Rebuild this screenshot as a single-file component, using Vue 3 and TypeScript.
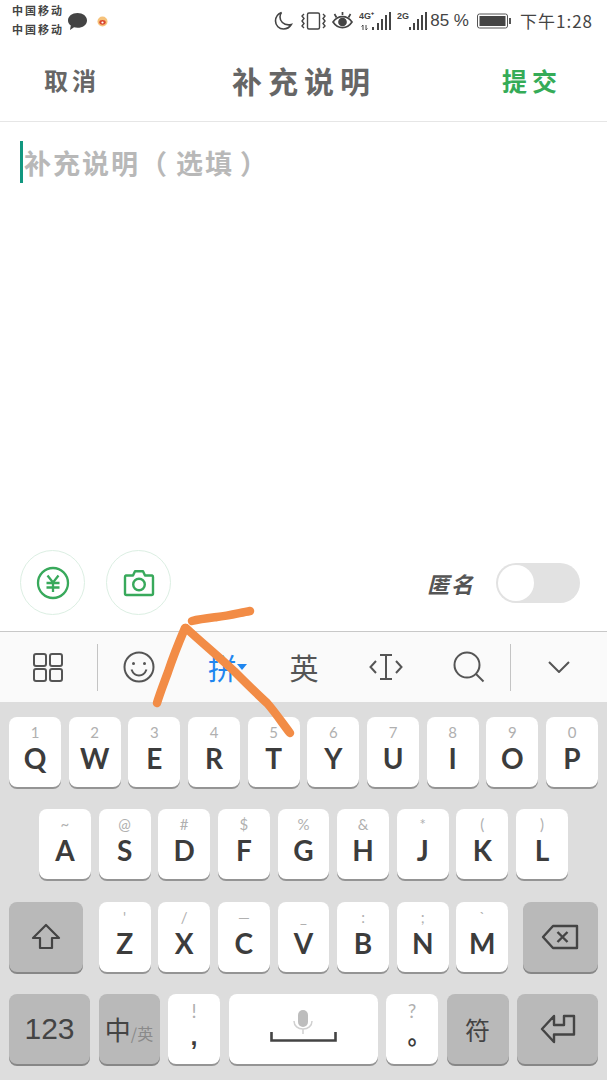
<script setup lang="ts">
interface Key {
  hint: string;
  label: string;
}

function toKeys(labels: string, hints: string[]): Key[] {
  return labels.split('').map((label, i) => ({ label, hint: hints[i] }));
}

const row1 = toKeys('QWERTYUIOP', ['1', '2', '3', '4', '5', '6', '7', '8', '9', '0']);
const row2 = toKeys('ASDFGHJKL', ['~', '@', '#', '$', '%', '&', '*', '(', ')']);
const row3 = toKeys('ZXCVBNM', ["'", '/', '—', '_', ':', ';', '`']);
</script>

<template>
  <div class="page">
    <div class="status">
      <div class="carriers">
        <span>中国移动</span>
        <span>中国移动</span>
      </div>
      <svg class="chat" width="21" height="19" viewBox="0 0 21 19">
        <path d="M10.5 1C15.8 1 20 4.2 20 8.4c0 4.2-4.2 7.4-9.5 7.4-1.3 0-2.4-.2-3.5-.5L3 18l.8-4.6C2 12 1 10.300 1 8.400 1 4.200 5.200 1 10.500 1z" fill="#444" />
      </svg>
      <svg class="weibo" width="11" height="11" viewBox="0 0 11 11">
        <circle cx="5.500" cy="5.500" r="5" fill="#f6c27a" />
        <ellipse cx="5.500" cy="6.300" rx="3.200" ry="2.400" fill="#d9472f" />
        <circle cx="5.500" cy="6.500" r="1.100" fill="#fff" />
      </svg>
      <div class="status-right">
        <svg width="19" height="20" viewBox="0 0 19 20" fill="none" stroke="#444" stroke-width="1.600">
          <path d="M7.500 1.500C4 3 1.500 6.200 1.500 10c0 4.600 3.700 8 8 8 3.400 0 6.200-1.800 7.800-4.500-1 .3-1.800.4-2.800.4-5 0-8.500-3.700-8.500-8 0-1.600.6-3.300 1.500-4.400z" />
        </svg>
        <svg class="ml8" width="25" height="20" viewBox="0 0 25 20" fill="none" stroke="#444" stroke-width="1.400">
          <rect x="6.500" y="2" width="12" height="16" rx="1.500" />
          <path d="M3 3l-2 2 2 2.500L1 10l2 2.500L1 15l2 2M22 3l2 2-2 2.500L24 10l-2 2.500L24 15l-2 2" />
        </svg>
        <svg class="ml6" width="21" height="20" viewBox="0 0 21 20" fill="none" stroke="#444" stroke-width="1.700">
          <path d="M1 11c2.500-3.600 5.700-5.400 9.500-5.400S17.500 7.400 20 11c-2.500 3.800-5.700 5.600-9.500 5.600S3.500 14.800 1 11z" />
          <circle cx="10.500" cy="11" r="3.500" fill="#444" />
          <path d="M2.500 3l2 3.500M18.500 3l-2 3.500M10.500 1v3" />
        </svg>
        <svg class="ml6" width="34" height="20" viewBox="0 0 34 20">
          <text class="net" x="0" y="8">4G⁺</text>
          <path d="M4 19v-5l-1.500 1.500M7 14v5l1.500-1.500" fill="none" stroke="#444" stroke-width="1" />
          <g fill="#444">
            <rect x="13" y="16" width="2" height="3" />
            <rect x="18" y="12" width="2" height="7" />
            <rect x="22" y="8" width="2" height="11" />
            <rect x="26" y="4" width="2" height="15" />
            <rect x="30" y="1" width="2" height="18" />
          </g>
        </svg>
        <svg class="ml4" width="32" height="20" viewBox="0 0 32 20">
          <text class="net" x="0" y="8">2G</text>
          <g fill="#444">
            <rect x="12" y="16" width="2" height="3" />
            <rect x="16" y="12" width="2" height="7" />
            <rect x="20" y="8" width="2" height="11" />
            <rect x="24" y="4" width="2" height="15" />
            <rect x="28" y="1" width="2" height="18" />
          </g>
        </svg>
        <span class="percent">85 %</span>
        <svg class="ml8" width="34" height="16" viewBox="0 0 34 16">
          <rect x="0.500" y="1" width="30" height="14" rx="2" fill="none" stroke="#555" />
          <rect x="2.500" y="3" width="26" height="10" fill="#444" />
          <rect x="32" y="5" width="2" height="6" fill="#555" />
        </svg>
        <span class="time">下午1:28</span>
      </div>
    </div>

    <div class="nav">
      <span class="cancel">取消</span>
      <span class="title">补充说明</span>
      <span class="submit">提交</span>
    </div>

    <main class="body">
      <div class="editor">
        <span class="caret"></span>
        <span class="placeholder">补充说明（<span class="inner">选填</span>）</span>
      </div>
      <div class="actions">
        <button class="round">
          <svg width="34" height="34" viewBox="0 0 34 34" fill="none" stroke="#38a95b" stroke-width="2.300">
            <circle cx="17" cy="17" r="15" />
            <path d="M11.500 9.500l5.500 7 5.500-7M10.500 17h13M10.500 21.500h13M17 16.500V26" />
          </svg>
        </button>
        <button class="round">
          <svg width="32" height="28" viewBox="0 0 32 28" fill="none" stroke="#38a95b" stroke-width="2.400" stroke-linejoin="round">
            <path d="M3 6.500h7l2-4.300h8l2 4.300h7a1.500 1.500 0 0 1 1 1.500v16.500a1.500 1.500 0 0 1-1.500 1.500h-25A1.500 1.500 0 0 1 2 24.500V8a1.500 1.500 0 0 1 1-1.500z" />
            <circle cx="16" cy="15.500" r="5.800" />
          </svg>
        </button>
        <span class="anon">匿名</span>
        <span class="toggle"><span class="knob"></span></span>
      </div>
    </main>

    <div class="toolbar">
      <span class="tool first">
        <svg width="32" height="31" viewBox="0 0 32 31" fill="none" stroke="#555" stroke-width="2">
          <rect x="2" y="2" width="12" height="12" rx="2" />
          <rect x="18" y="2" width="12" height="12" rx="2" />
          <rect x="2" y="17" width="12" height="12" rx="2" />
          <rect x="18" y="17" width="12" height="12" rx="2" />
        </svg>
      </span>
      <span class="sep"></span>
      <span class="tool">
        <svg width="32" height="32" viewBox="0 0 32 32" fill="none" stroke="#555" stroke-width="2">
          <circle cx="16" cy="16" r="14.500" />
          <circle cx="10.500" cy="12.500" r="1.500" fill="#555" stroke="none" />
          <circle cx="21.500" cy="12.500" r="1.500" fill="#555" stroke="none" />
          <path d="M8.500 18.500c1.500 4 4.300 6 7.500 6s6-2 7.500-6" />
        </svg>
      </span>
      <span class="tool pin">拼<i class="tri"></i></span>
      <span class="tool eng">英</span>
      <span class="tool">
        <svg width="34" height="28" viewBox="0 0 34 28" fill="none" stroke="#555" stroke-width="2">
          <path d="M7 8l-5.500 6L7 20M27 8l5.500 6L27 20M11 2h12M11 26h12M17 2v24" />
        </svg>
      </span>
      <span class="tool">
        <svg width="32" height="32" viewBox="0 0 32 32" fill="none" stroke="#555" stroke-width="2">
          <circle cx="14" cy="14" r="12.500" />
          <path d="M23 23l7.500 7.500" />
        </svg>
      </span>
      <span class="sep"></span>
      <span class="tool last">
        <svg width="22" height="12" viewBox="0 0 22 12" fill="none" stroke="#555" stroke-width="2">
          <path d="M1 1l10 10L21 1" />
        </svg>
      </span>
    </div>

    <div class="keyboard">
      <div class="row">
        <button v-for="k in row1" :key="k.label" class="key">
          <span class="hint">{{ k.hint }}</span>
          <span class="letter">{{ k.label }}</span>
        </button>
      </div>
      <div class="row second">
        <button v-for="k in row2" :key="k.label" class="key">
          <span class="hint">{{ k.hint }}</span>
          <span class="letter">{{ k.label }}</span>
        </button>
      </div>
      <div class="row">
        <button class="key fn shift">
          <svg width="30" height="28" viewBox="0 0 30 28" fill="none" stroke="#444" stroke-width="2.200" stroke-linejoin="round">
            <path d="M15 2L2 15h7v10h12V15h7z" />
          </svg>
        </button>
        <button v-for="k in row3" :key="k.label" class="key">
          <span class="hint">{{ k.hint }}</span>
          <span class="letter">{{ k.label }}</span>
        </button>
        <button class="key fn del">
          <svg width="38" height="26" viewBox="0 0 38 26" fill="none" stroke="#444" stroke-width="2.400" stroke-linejoin="round">
            <path d="M12 2h24v22H12L2 13z" />
            <path d="M16.500 8l10 10M26.500 8l-10 10" />
          </svg>
        </button>
      </div>
      <div class="row last-row">
        <button class="key fn w81 num">123</button>
        <button class="key fn w61 lang">中<small>/英</small></button>
        <button class="key punct">
          <span class="p-hint">!</span>
          <span class="p-main">,</span>
        </button>
        <button class="key space">
          <svg class="mic" width="22" height="26" viewBox="0 0 22 26" fill="none">
            <rect x="6" y="1" width="10" height="17" rx="5" fill="#bdbdbd" />
            <path d="M2 12c0 5 4 8 9 8s9-3 9-8M11 20v5" stroke="#d0d0d0" stroke-width="1.500" />
          </svg>
          <svg class="bracket" width="67" height="10" viewBox="0 0 67 10" fill="none">
            <path d="M1.500 0v8.500h64V0" stroke="#444" stroke-width="2.600" />
          </svg>
        </button>
        <button class="key punct">
          <span class="p-hint thin">?</span>
          <span class="p-main dot">。</span>
        </button>
        <button class="key fn w62 sym">符</button>
        <button class="key fn w81">
          <svg width="36" height="30" viewBox="0 0 36 30" fill="none" stroke="#444" stroke-width="2.400" stroke-linejoin="round">
            <path d="M14 2L2 15l12 13v-7.500h20V2H24v9H14z" />
          </svg>
        </button>
      </div>
    </div>

    <svg class="scribble" width="607" height="1080" viewBox="0 0 607 1080" fill="none">
      <g stroke="#f28c46" stroke-width="8.500" stroke-linecap="round" stroke-linejoin="round">
        <path d="M157 703c3-10 7-20 11-31 5-15 11-30 17-44" />
        <path d="M186 628c15 14 32 28 48 43 11 11 22 22 33 32 8 9 16 21 23 30" />
        <path d="M192 621c8-2 17-3 25-4 12-1 22-4 33-6" />
      </g>
    </svg>
  </div>
</template>

<style>
html,
body {
  background: #fff;
}
</style>

<style scoped>
.page {
  position: relative;
  width: 607px;
  height: 1080px;
  overflow: hidden;
  display: flex;
  flex-direction: column;
  background: #fff;
  font-family: "Noto Sans CJK SC", "Liberation Sans", sans-serif;
  color: #444;
}
button {
  border: none;
  padding: 0;
  font-family: inherit;
  color: inherit;
}

.status {
  height: 42px;
  padding: 0 14px 0 12px;
  display: flex;
  align-items: center;
}
.carriers {
  display: flex;
  flex-direction: column;
  gap: 5px;
  margin-top: -3px;
  font-size: 11px;
  line-height: 14px;
  font-weight: 700;
  letter-spacing: 2px;
  color: #444;
}
.chat {
  margin-left: 3px;
}
.weibo {
  margin-left: 9px;
  margin-top: 0;
}
.status-right {
  margin-left: auto;
  display: flex;
  align-items: center;
}
.ml8 {
  margin-left: 8px;
}
.ml6 {
  margin-left: 6px;
}
.ml4 {
  margin-left: 4px;
}
.net {
  font-family: "Liberation Sans", sans-serif;
  font-size: 9px;
  font-weight: 700;
  fill: #444;
}
.percent {
  margin-left: 1px;
  font-family: "Liberation Sans", sans-serif;
  font-size: 17px;
  color: #444;
}
.time {
  margin-left: 9px;
  margin-top: -2px;
  font-size: 17px;
  letter-spacing: 1px;
  color: #444;
}

.nav {
  height: 80px;
  box-sizing: border-box;
  padding: 0 45px 4px 44px;
  border-bottom: 1px solid #e6e6e6;
  display: flex;
  align-items: center;
  justify-content: space-between;
  font-weight: 700;
}
.cancel {
  font-size: 24px;
  letter-spacing: 4px;
  color: #666;
}
.title {
  padding-left: 6px;
  font-size: 30px;
  letter-spacing: 6px;
  color: #666;
}
.submit {
  font-size: 25px;
  letter-spacing: 5px;
  color: #35ab57;
}

.body {
  flex: 1;
  display: flex;
  flex-direction: column;
}
.editor {
  padding: 19px 0 0 20px;
  display: flex;
  align-items: center;
  gap: 1px;
}
.caret {
  width: 3px;
  height: 42px;
  background: #11977f;
}
.placeholder {
  font-size: 27px;
  letter-spacing: 2px;
  font-weight: 700;
  color: #b8b8b8;
  text-spacing-trim: space-all;
}
.inner {
  margin: 0 6px 0 7px;
}
.actions {
  margin-top: auto;
  padding: 0 27px 16px 20px;
  display: flex;
  align-items: center;
  gap: 21px;
}
.round {
  width: 65px;
  height: 65px;
  border-radius: 50%;
  background: #fff;
  border: 1px solid #dcefe3;
  box-sizing: border-box;
  display: flex;
  align-items: center;
  justify-content: center;
}
.anon {
  margin-left: auto;
  margin-right: 0;
  font-size: 22px;
  font-weight: 700;
  font-style: italic;
  letter-spacing: 2px;
  color: #555;
}
.toggle {
  width: 84px;
  height: 40px;
  box-sizing: border-box;
  padding: 2px;
  border-radius: 20px;
  background: #e2e2e2;
}
.knob {
  display: block;
  width: 36px;
  height: 36px;
  border-radius: 50%;
  background: #fff;
}

.toolbar {
  height: 71px;
  flex: none;
  box-sizing: border-box;
  border-top: 1px solid #c8c8c8;
  background: #fafafa;
  display: flex;
  align-items: center;
}
.tool {
  width: 82.500px;
  display: flex;
  align-items: center;
  justify-content: center;
  font-size: 29px;
  line-height: 40px;
  color: #555;
}
.tool.first {
  width: 97px;
}
.tool.last {
  width: 96px;
}
.sep {
  width: 1px;
  height: 47px;
  background: #c4c4c4;
}
.tool.pin {
  color: #1f86ef;
  padding-left: 12px;
  box-sizing: border-box;
}
.tri {
  margin-left: 0;
  border: 5px solid transparent;
  border-top: 6px solid #1f86ef;
  border-bottom: 0;
}

.keyboard {
  flex: none;
  height: 378px;
  box-sizing: border-box;
  background: #dddddd;
  padding: 15px 9px 0;
  display: flex;
  flex-direction: column;
  gap: 22.300px;
}
.row {
  display: flex;
  gap: 7.700px;
}
.row.second {
  padding: 0 30px;
}
.key {
  flex: 1;
  height: 70px;
  border-radius: 8px;
  background: #fff;
  box-shadow: 0 2px 0 #949494;
  display: flex;
  flex-direction: column;
  align-items: center;
  padding-top: 6px;
  box-sizing: border-box;
}
.hint {
  height: 18px;
  font-family: Lato, "Liberation Sans", sans-serif;
  font-size: 15px;
  line-height: 18px;
  color: #b0b0b0;
}
.letter {
  height: 34px;
  font-family: Lato, "Liberation Sans", sans-serif;
  font-size: 28px;
  line-height: 34px;
  font-weight: 700;
  color: #3c3c3c;
}
.fn {
  flex: none;
  padding: 0;
  background: #b9b9b9;
  box-shadow: 0 2px 0 #878787;
  justify-content: center;
}
.shift {
  width: 74px;
  margin-right: 8px;
}
.del {
  width: 75px;
  margin-left: 7px;
}
.last-row {
  gap: 8.500px;
}
.w81 {
  width: 81px;
}
.w61 {
  width: 61px;
}
.w62 {
  width: 62px;
}
.num {
  font-family: "Liberation Sans", sans-serif;
  font-size: 30px;
  color: #444;
}
.lang {
  flex-direction: row;
  font-size: 26px;
  color: #444;
}
.lang small {
  margin-top: 8px;
  font-size: 16px;
  color: #8a8a8a;
}
.sym {
  font-size: 25px;
  color: #444;
}
.punct {
  flex: none;
  width: 52px;
  padding-top: 5px;
}
.p-hint {
  height: 23px;
  font-family: Lato, "Liberation Sans", sans-serif;
  font-size: 19px;
  line-height: normal;
  color: #b0b0b0;
}
.p-main {
  font-family: "Liberation Sans", sans-serif;
  font-size: 25px;
  line-height: normal;
  font-weight: 700;
  color: #3c3c3c;
}
.dot {
  margin-top: 2px;
  font-family: "Noto Sans CJK TC", sans-serif;
  font-size: 23px;
}
.space {
  flex: none;
  width: 149px;
  padding-top: 15px;
}
.mic {
  display: block;
}
.bracket {
  display: block;
  margin-top: -3px;
}

.scribble {
  position: absolute;
  top: 0;
  left: 0;
  pointer-events: none;
}
</style>
